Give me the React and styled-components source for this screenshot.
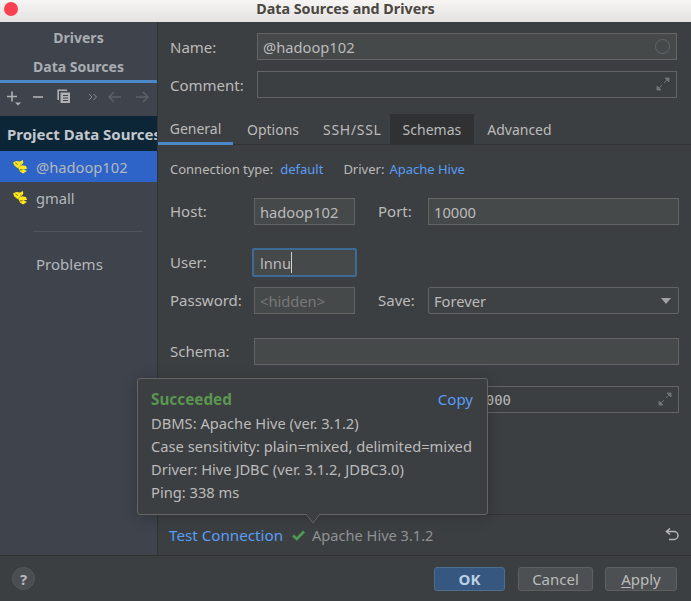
import React from 'react'
import styled, { createGlobalStyle } from 'styled-components'

const GlobalStyle = createGlobalStyle`
    html, body {
        margin: 0;
        padding: 0;
        background: #3c3f41;
    }
    body {
        font-family: "Noto Sans", "Open Sans", sans-serif;
        color: #bbbbbb;
    }
`

const Window = styled.div`
    position: relative;
    width: 691px;
    height: 601px;
    overflow: hidden;
    display: flex;
    flex-direction: column;
    background: #3c3f41;
`

const TitleBar = styled.div`
    position: relative;
    height: 22px;
    box-sizing: border-box;
    padding-bottom: 5px;
    flex: none;
    display: flex;
    align-items: center;
    justify-content: center;
    background: linear-gradient(#f6f5f4, #e4e3e1);
    color: #4a4640;
    font-size: 14.3px;
    font-weight: 700;
`

const CloseDot = styled.span`
    position: absolute;
    left: 4px;
    top: 2px;
    width: 14px;
    height: 14px;
    border-radius: 50%;
    background: #f9424f;
`

const Body = styled.div`
    flex: 1;
    display: flex;
    min-height: 0;
`

const Sidebar = styled.aside`
    width: 157px;
    flex: none;
    background: #3e434c;
    border-right: 1px solid #323232;
    overflow: hidden;
    display: flex;
    flex-direction: column;
`

const SideTab = styled.div`
    box-sizing: border-box;
    height: ${p => p.$h}px;
    display: flex;
    align-items: center;
    justify-content: center;
    font-size: 14px;
    font-weight: 700;
    color: #a9adb2;
    ${p => p.$active && 'border-bottom: 3px solid #4a88c7;'}
`

const Toolbar = styled.div`
    height: 33px;
    box-sizing: border-box;
    padding: 0 0 5px 6px;
    display: flex;
    align-items: center;
    svg {
        display: block;
        flex: none;
    }
`

const GroupHeader = styled.div`
    height: 35px;
    flex: none;
    display: flex;
    align-items: center;
    padding-left: 7px;
    background: #0c2638;
    color: #c4c8cc;
    font-size: 15px;
    font-weight: 700;
    white-space: nowrap;
`

const SourceRow = styled.div`
    height: 31px;
    flex: none;
    display: flex;
    align-items: center;
    gap: 9px;
    padding-left: 13px;
    font-size: 14.7px;
    color: #b4b8bd;
    background: ${p => (p.$selected ? '#2e64c8' : 'transparent')};
`

const SideDivider = styled.div`
    height: 1px;
    flex: none;
    margin: 18px 14px 0 33px;
    background: #50545b;
`

const ProblemsLink = styled.div`
    margin: 22px 0 0 36px;
    font-size: 15px;
    line-height: 20px;
    color: #b4b8bd;
`

const Main = styled.main`
    flex: 1;
    min-width: 0;
    display: flex;
    flex-direction: column;
`

const Header = styled.div`
    padding: 11px 14px 0 12px;
    display: flex;
    flex-direction: column;
    gap: 11px;
`

const HeaderRow = styled.div`
    display: flex;
    align-items: center;
`

const HeaderLabel = styled.label`
    width: 87px;
    flex: none;
    font-size: 15px;
    color: #bbbbbb;
`

const Field = styled.div`
    position: relative;
    box-sizing: border-box;
    height: 27px;
    flex: ${p => (p.$w ? 'none' : 1)};
    width: ${p => (p.$w ? `${p.$w}px` : 'auto')};
    display: flex;
    align-items: center;
    padding: 0 5px;
    background: ${p => (p.$flat ? '#3c3f41' : '#45494a')};
    border: 1px solid #646464;
    font-size: 14.7px;
    color: ${p => (p.$muted ? '#787878' : '#bbbbbb')};
    white-space: nowrap;
    svg {
        position: absolute;
        right: 6px;
        top: 5px;
    }
`

const FocusField = styled(Field)`
    width: 105px;
    height: 29px;
    margin: 0 -2px;
    padding: 0 4px 0 6px;
    border: 2px solid #3d6a96;
    border-radius: 2px;
`

const Caret = styled.span`
    width: 1px;
    height: 21px;
    background: #d0d0d0;
`

const Combo = styled(Field)`
    border-radius: 2px;
    background: #3f4244;
`

const TabBar = styled.div`
    margin-top: 16px;
    height: 31px;
    box-sizing: border-box;
    display: flex;
    border-bottom: 1px solid #323232;
`

const Tab = styled.div`
    padding: ${p => p.$pad || '0 13px'};
    letter-spacing: ${p => p.$spacing || 0}px;
    display: flex;
    align-items: center;
    font-size: 14px;
    height: 31px;
    box-sizing: border-box;
    color: #bbbbbb;
    background: ${p => (p.$current ? '#2f3133' : 'transparent')};
    ${p => p.$selected && `
        width: 75px;
        justify-content: center;
        border-bottom: 3px solid #4a88c7;
        padding: 0;
    `}
`

const Form = styled.div`
    flex: 1;
    padding: 14px 12px 0 12px;
`

const InfoLine = styled.div`
    height: 20px;
    display: flex;
    align-items: center;
    font-size: 13px;
    color: #bbbbbb;
`

const Link = styled.span`
    color: #589df6;
    margin: ${p => p.$m || '0 0 0 7px'};
`

const DriverLabel = styled.span`
    margin: 0 5px 0 20px;
`

const FormRow = styled.div`
    display: flex;
    align-items: center;
    margin-top: ${p => p.$top}px;
`

const Label = styled.label`
    width: ${p => p.$w}px;
    flex: none;
    padding-bottom: 2px;
    font-size: 15px;
    color: #bbbbbb;
    margin-left: ${p => p.$ml || 0}px;
`

const UrlValue = styled.span`
    margin-left: auto;
    margin-right: 162px;
    font-family: "DejaVu Sans Mono", "Liberation Mono", monospace;
    font-size: 14px;
`

const TestBar = styled.div`
    height: 41px;
    flex: none;
    box-sizing: border-box;
    border-top: 1px solid #323232;
    display: flex;
    align-items: center;
    padding: 0 12px 0 11px;
    svg {
        display: block;
    }
`

const TestLink = styled.span`
    color: #589df6;
    font-size: 15.2px;
    margin-right: 9px;
`

const TestStatus = styled.span`
    margin-left: 7px;
    color: #8f9295;
    font-size: 14.6px;
`

const Undo = styled.span`
    margin-left: auto;
    display: block;
`

const Footer = styled.footer`
    height: 46px;
    flex: none;
    box-sizing: border-box;
    border-top: 1px solid #323232;
    display: flex;
    align-items: center;
    padding: 0 14px 0 12px;
`

const HelpButton = styled.div`
    width: 23px;
    height: 23px;
    border-radius: 50%;
    background: #4b4e51;
    border: 1px solid #55585b;
    box-sizing: border-box;
    display: flex;
    align-items: center;
    justify-content: center;
    color: #b6b8ba;
    font-size: 15px;
    font-weight: 700;
    margin-right: auto;
`

const Button = styled.button`
    box-sizing: border-box;
    width: ${p => p.$w}px;
    height: 24px;
    margin-left: ${p => p.$ml || 0}px;
    padding: 0;
    border-radius: 3px;
    border: 1px solid ${p => (p.$primary ? '#4c708c' : '#5e6060')};
    background: ${p => (p.$primary ? '#365880' : '#4c5052')};
    color: ${p => (p.$primary ? '#bbd0e4' : '#bbbbbb')};
    font-family: inherit;
    font-size: 15px;
    font-weight: ${p => (p.$primary ? 700 : 400)};
    u {
        text-underline-offset: 2px;
    }
`

const Popup = styled.div`
    position: absolute;
    left: 137px;
    top: 378px;
    width: 351px;
    height: 137px;
    box-sizing: border-box;
    padding: 9px 14px 0 13px;
    background: #3c3f41;
    border: 1px solid #636567;
    border-radius: 3px;
    box-shadow: 0 2px 14px rgba(0, 0, 0, 0.22);
    font-size: 14.7px;
    line-height: 23px;
    color: #bbbbbb;
    white-space: nowrap;
`

const PopupHead = styled.div`
    display: flex;
    justify-content: space-between;
    align-items: center;
    height: 22px;
    margin-bottom: 2px;
`

const Succeeded = styled.span`
    color: #5b9650;
    font-weight: 700;
    font-size: 15.3px;
`

const CopyLink = styled.span`
    color: #589df6;
    font-size: 15px;
`

const PopupTail = styled.svg`
    position: absolute;
    left: 167px;
    bottom: -10px;
    display: block;
`

const HiveIcon = () => (
    <svg width="14" height="14" viewBox="0 0 14 14">
        <path d="M0 2.4 L3 1 L6.6 1.4 L8 5.6 L4.4 8 L1.4 5.4 Z" fill="#ffe81a" />
        <path d="M6 2 L10 0 L10.2 3 L8.4 5 Z" fill="#ffe81a" />
        <path d="M5 7.6 L9 5.2 L13 6 L14 9 L10.4 9.2 L14 11 L10 13.4 L7 11.4 Z" fill="#ffe81a" />
        <path d="M2.4 2.8 L4.8 4.6 M6.6 10 L9.6 9.6" stroke="#6b6420" strokeWidth="0.9" />
    </svg>
)

const ExpandIcon = () => (
    <svg width="14" height="14" viewBox="0 0 14 14" fill="#6f7274" stroke="#6f7274" strokeWidth="1">
        <path d="M8 6 L11.5 2.5" fill="none" />
        <path d="M9 1 H13 V5 Z" />
        <path d="M6 8 L2.5 11.5" fill="none" />
        <path d="M1 9 V13 H5 Z" />
    </svg>
)

export default function App() {
    return (
        <Window>
            <GlobalStyle />
            <TitleBar>
                <CloseDot />
                Data Sources and Drivers
            </TitleBar>
            <Body>
                <Sidebar>
                    <SideTab $h={30}>Drivers</SideTab>
                    <SideTab $h={31} $active>Data Sources</SideTab>
                    <Toolbar>
                        <svg width="18" height="20" viewBox="0 0 18 20">
                            <path d="M1 9.5 H11 M6 4.5 V14.5" stroke="#afb1b3" strokeWidth="1.6" fill="none" />
                            <path d="M9 15.5 H15 L12 18.5 Z" fill="#afb1b3" />
                        </svg>
                        <svg width="20" height="16" viewBox="0 0 20 16" style={{ marginLeft: 5 }}>
                            <path d="M4 8 H14" stroke="#afb1b3" strokeWidth="1.6" />
                        </svg>
                        <svg width="16" height="16" viewBox="0 0 16 16" style={{ marginLeft: 8 }}>
                            <path d="M1.2 11 V1.2 H10" stroke="#afb1b3" strokeWidth="1.6" fill="none" />
                            <path d="M3.5 3.5 H13 V14 H3.5 Z" fill="#afb1b3" />
                            <path d="M6 6.5 H11 M6 9 H11 M6 11.5 H11" stroke="#3e434c" strokeWidth="1" />
                        </svg>
                        <svg width="10" height="10" viewBox="0 0 10 10" fill="none" stroke="#8a8d90" strokeWidth="1" style={{ marginLeft: 15 }}>
                            <path d="M1 2 L4 5 L1 8 M5.5 2 L8.5 5 L5.5 8" />
                        </svg>
                        <svg width="16" height="14" viewBox="0 0 16 14" fill="none" stroke="#5d6064" strokeWidth="1.6" style={{ marginLeft: 9 }}>
                            <path d="M14 7 H2 M7 2 L2 7 L7 12" />
                        </svg>
                        <svg width="16" height="14" viewBox="0 0 16 14" fill="none" stroke="#5d6064" strokeWidth="1.6" style={{ marginLeft: 11 }}>
                            <path d="M2 7 H14 M9 2 L14 7 L9 12" />
                        </svg>
                    </Toolbar>
                    <GroupHeader>Project Data Sources</GroupHeader>
                    <SourceRow $selected><HiveIcon />@hadoop102</SourceRow>
                    <SourceRow><HiveIcon />gmall</SourceRow>
                    <SideDivider />
                    <ProblemsLink>Problems</ProblemsLink>
                </Sidebar>
                <Main>
                    <Header>
                        <HeaderRow>
                            <HeaderLabel>Name:</HeaderLabel>
                            <Field>
                                @hadoop102
                                <svg width="15" height="15" viewBox="0 0 15 15" fill="none" stroke="#636668" strokeWidth="1">
                                    <circle cx="7.5" cy="7.5" r="7" />
                                </svg>
                            </Field>
                        </HeaderRow>
                        <HeaderRow>
                            <HeaderLabel>Comment:</HeaderLabel>
                            <Field $flat><ExpandIcon /></Field>
                        </HeaderRow>
                    </Header>
                    <TabBar>
                        <Tab $selected>General</Tab>
                        <Tab $pad="0 12px 0 14px">Options</Tab>
                        <Tab $pad="0 8px 0 12px" $spacing={0.7}>SSH/SSL</Tab>
                        <Tab $current>Schemas</Tab>
                        <Tab>Advanced</Tab>
                    </TabBar>
                    <Form>
                        <InfoLine>
                            Connection type:
                            <Link>default</Link>
                            <DriverLabel>Driver:</DriverLabel>
                            <Link $m="0">Apache Hive</Link>
                        </InfoLine>
                        <FormRow $top={19}>
                            <Label $w={84}>Host:</Label>
                            <Field $w={101}>hadoop102</Field>
                            <Label $w={50} $ml={23}>Port:</Label>
                            <Field>10000</Field>
                        </FormRow>
                        <FormRow $top={23}>
                            <Label $w={84}>User:</Label>
                            <FocusField $w={105}>lnnu<Caret /></FocusField>
                        </FormRow>
                        <FormRow $top={10}>
                            <Label $w={84}>Password:</Label>
                            <Field $w={101} $muted>&lt;hidden&gt;</Field>
                            <Label $w={50} $ml={23}>Save:</Label>
                            <Combo>
                                Forever
                                <svg width="12" height="8" viewBox="0 0 12 8" style={{ top: 9 }}>
                                    <path d="M1 1 H11 L6 7 Z" fill="#a0a2a4" />
                                </svg>
                            </Combo>
                        </FormRow>
                        <FormRow $top={24}>
                            <Label $w={84}>Schema:</Label>
                            <Field />
                        </FormRow>
                        <FormRow $top={21}>
                            <Label $w={84} />
                            <Field $flat>
                                <UrlValue>000</UrlValue>
                                <ExpandIcon />
                            </Field>
                        </FormRow>
                    </Form>
                    <TestBar>
                        <TestLink>Test Connection</TestLink>
                        <svg width="13" height="11" viewBox="0 0 13 11" fill="none" stroke="#499c54" strokeWidth="2.6">
                            <path d="M1 5.5 L4.8 9 L12 1.5" />
                        </svg>
                        <TestStatus>Apache Hive 3.1.2</TestStatus>
                        <Undo>
                            <svg width="14" height="14" viewBox="0 0 14 14" fill="none" stroke="#b4b6b8" strokeWidth="1.5">
                                <path d="M1.5 3.5 H9 A3.7 3.7 0 0 1 9 11.5 H4" />
                                <path d="M5 .5 L1.5 3.5 L5 6.5" />
                            </svg>
                        </Undo>
                    </TestBar>
                </Main>
            </Body>
            <Footer>
                <HelpButton>?</HelpButton>
                <Button $primary $w={71}>OK</Button>
                <Button $w={75} $ml={13}>Cancel</Button>
                <Button $w={72} $ml={12}><u>A</u>pply</Button>
            </Footer>
            <Popup>
                <PopupHead>
                    <Succeeded>Succeeded</Succeeded>
                    <CopyLink>Copy</CopyLink>
                </PopupHead>
                <div>DBMS: Apache Hive (ver. 3.1.2)</div>
                <div>Case sensitivity: plain=mixed, delimited=mixed</div>
                <div>Driver: Hive JDBC (ver. 3.1.2, JDBC3.0)</div>
                <div>Ping: 338 ms</div>
                <PopupTail width="16" height="10" viewBox="0 0 16 10" fill="#3c3f41" stroke="#636567">
                    <path d="M1 0 L8 9 L15 0" />
                </PopupTail>
            </Popup>
        </Window>
    )
}
